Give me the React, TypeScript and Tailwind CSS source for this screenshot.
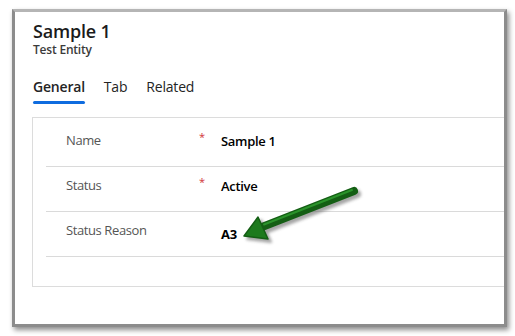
const rows = [
  { label: "Name", required: true, value: "Sample 1", h: "h-[49px]", pt: "pt-[13px]", vt: "pt-[14px]" },
  { label: "Status", required: true, value: "Active", h: "h-[45px]", pt: "pt-[9px]", vt: "pt-[10px]" },
  { label: "Status Reason", required: false, value: "A3", h: "h-[45px]", pt: "pt-[9px]", vt: "pt-[13px]" },
];

function Arrow() {
  return (
    <svg
      className="absolute left-0 top-0 pointer-events-none"
      width="515"
      height="336"
      viewBox="0 0 515 336"
    >
      <defs>
        <filter id="sh" x="-20%" y="-20%" width="140%" height="140%">
          <feGaussianBlur stdDeviation="1.5" />
        </filter>
      </defs>
      <g transform="translate(3 3)" fill="#6b6b6b" stroke="#6b6b6b" opacity="0.6" filter="url(#sh)">
        <line x1="354" y1="191" x2="262" y2="227" strokeWidth="8" strokeLinecap="round" />
        <polygon points="244,236 258,217 268,239" strokeWidth="2" strokeLinejoin="round" />
      </g>
      <g fill="#1d7a1d" stroke="#145e14">
        <line x1="354" y1="191" x2="262" y2="227" strokeWidth="8" strokeLinecap="round" />
        <polygon points="244,236 258,217 268,239" strokeWidth="1.5" strokeLinejoin="round" />
      </g>
      <line x1="352" y1="190" x2="264" y2="224.5" stroke="#2b932b" strokeWidth="2" strokeLinecap="round" />
    </svg>
  );
}

export default function App() {
  return (
    <div
      className="relative w-[515px] h-[336px] bg-white pt-[9px] pl-[12px]"
      style={{ fontFamily: '"Open Sans", "Noto Sans", sans-serif' }}
    >
      <div className="w-[495px] h-[318px] border-[3px] border-[#8c8c8c] border-t-[#b5b5b5] shadow-[2px_3px_5px_rgba(0,0,0,0.45)] bg-white overflow-hidden">
        <div className="pl-[18px] pt-[8px]">
          <h1 className="text-[18px] leading-[22px] font-semibold text-[#1b1b1b] tracking-[-0.2px]">
            Sample 1
          </h1>
          <p className="text-[12px] leading-[16px] font-semibold text-[#3b3b3b] tracking-[-0.2px]">
            Test Entity
          </p>
          <div className="flex gap-[19px] mt-[20px] text-[14px] leading-[18px] text-[#242424] tracking-[-0.2px]">
            <div className="flex flex-col">
              <span className="font-semibold">General</span>
              <span className="mt-[5px] h-[3px] rounded-full bg-[#0f6cdf]" />
            </div>
            <span>Tab</span>
            <span>Related</span>
          </div>
        </div>
        <div className="ml-[17px] mt-[13px] w-[520px] h-[170px] border border-[#dcdcdc] bg-white">
          <div className="pl-[13px]">
            {rows.map((r) => (
              <div key={r.label} className={`flex border-b border-[#dadada] ${r.h}`}>
                <div
                  className={`w-[153px] pl-[20px] text-[13px] leading-[18px] tracking-[-0.4px] text-[#555] ${r.pt}`}
                >
                  {r.label}
                </div>
                <div className={`w-[22px] text-[#d13438] text-[11px] leading-[12px] ${r.pt}`}>
                  {r.required ? "*" : ""}
                </div>
                <div
                  className={`text-[13px] leading-[18px] tracking-[-0.3px] text-black ${r.vt} ${
                    r.value === "A3" ? "font-bold" : "font-semibold"
                  }`}
                >
                  {r.value}
                </div>
              </div>
            ))}
          </div>
        </div>
      </div>
      <Arrow />
    </div>
  );
}
